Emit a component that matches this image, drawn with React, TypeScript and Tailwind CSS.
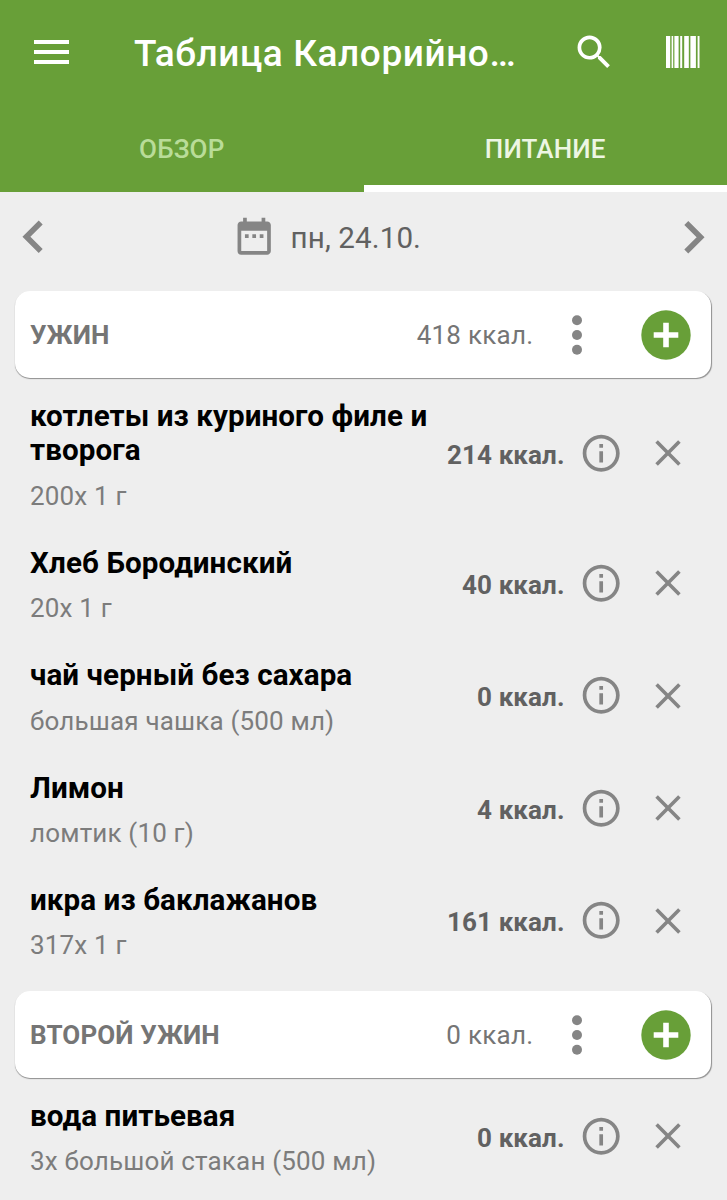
import { MdDateRange, MdInfoOutline, MdSearch } from "react-icons/md";

type Food = { name: string; amount: string; kcal: number };
type Meal = { title: string; kcal: number; foods: Food[] };

const meals: Meal[] = [
  {
    title: "УЖИН",
    kcal: 418,
    foods: [
      { name: "котлеты из куриного филе и творога", amount: "200x 1 г", kcal: 214 },
      { name: "Хлеб Бородинский", amount: "20x 1 г", kcal: 40 },
      { name: "чай черный без сахара", amount: "большая чашка (500 мл)", kcal: 0 },
      { name: "Лимон", amount: "ломтик (10 г)", kcal: 4 },
      { name: "икра из баклажанов", amount: "317x 1 г", kcal: 161 },
    ],
  },
  {
    title: "ВТОРОЙ УЖИН",
    kcal: 0,
    foods: [{ name: "вода питьевая", amount: "3x большой стакан (500 мл)", kcal: 0 }],
  },
];

const MenuIcon = () => (
  <svg width="35" height="24" viewBox="0 0 35 24" fill="currentColor">
    <rect width="35" height="4" />
    <rect y="10" width="35" height="4" />
    <rect y="20" width="35" height="4" />
  </svg>
);

const BarcodeIcon = () => (
  <svg width="34" height="32" viewBox="0 0 34 32" fill="currentColor">
    <rect x="0" width="4.2" height="32" />
    <rect x="5.6" width="1.6" height="32" />
    <rect x="8.4" width="4.2" height="32" />
    <rect x="14.2" width="2" height="32" />
    <rect x="18.2" width="4.6" height="32" />
    <rect x="24.4" width="5.5" height="32" />
    <rect x="31.6" width="1.9" height="32" />
  </svg>
);

const Chevron = ({ flip = false }: { flip?: boolean }) => (
  <svg
    width="21"
    height="34"
    viewBox="0 0 21 34"
    fill="none"
    stroke="currentColor"
    strokeWidth="5.6"
    className={flip ? "rotate-180" : ""}
  >
    <path d="M18.7 2.4 L4.4 16.7 L18.7 31" />
  </svg>
);

const DotsIcon = () => (
  <svg width="10" height="40" viewBox="0 0 10 40" fill="currentColor">
    <circle cx="5" cy="5.2" r="5" />
    <circle cx="5" cy="20" r="5" />
    <circle cx="5" cy="34.8" r="5" />
  </svg>
);

const AddIcon = () => (
  <svg width="50" height="50" viewBox="0 0 50 50">
    <circle cx="25" cy="25" r="24.7" fill="#689f38" />
    <path d="M25 12.7 V37.3 M12.7 25 H37.3" stroke="#fff" strokeWidth="5.6" />
  </svg>
);

const CloseIcon = () => (
  <svg width="26" height="26" viewBox="0 0 26 26" fill="none" stroke="currentColor" strokeWidth="3.6">
    <path d="M1.6 1.6 L24.4 24.4 M24.4 1.6 L1.6 24.4" />
  </svg>
);

const MealHeader = ({ title, kcal }: { title: string; kcal: number }) => (
  <div className="ml-[15px] mr-4 flex h-[87px] items-center rounded-[15px] bg-white pl-[15px] pr-[19.7px] text-[26px] text-[#757575] shadow-[0.5px_1px_1px_rgba(0,0,0,0.4)]">
    <h2 className="flex-1 pt-[2px] font-bold tracking-[0.15px]">{title}</h2>
    <span className="pt-[2px] tracking-[0.25px]">{kcal} ккал.</span>
    <button className="ml-[39px] text-[#858585]">
      <DotsIcon />
    </button>
    <button className="ml-[59px]">
      <AddIcon />
    </button>
  </div>
);

const FoodRow = ({ name, amount, kcal }: Food) => (
  <li className="flex items-center pb-[16.2px] pl-[30px] pr-[46px] pt-[18.6px]">
    <div className="flex-1">
      <h3 className="text-[29.6px] font-bold leading-[34.8px] tracking-[0.07px] text-black">{name}</h3>
      <p className="mt-[12.4px] text-[26px] leading-[30.5px] tracking-[0.17px] text-[#7c7c7c]">{amount}</p>
    </div>
    <span className="ml-3 pt-px text-[26px] font-bold tracking-[0.1px] text-[#616161]">{kcal} ккал.</span>
    <div className="flex items-center pb-[3px] text-[#858585]">
      <button className="ml-[14px]">
        <MdInfoOutline size={44.4} />
      </button>
      <button className="ml-[32px]">
        <CloseIcon />
      </button>
    </div>
  </li>
);

const App = () => {
  return (
    <div className="h-[1200px] w-[727px] overflow-hidden bg-[#eeeeee] font-['Roboto',sans-serif]">
      <header className="bg-[#689f38] text-white">
        <div className="flex h-[103px] items-center pl-[34px] pr-[27px]">
          <button>
            <MenuIcon />
          </button>
          <h1 className="ml-[65px] w-[390px] whitespace-nowrap pt-1 text-[37px] font-medium tracking-[0.57px]">
            Таблица Калорийно…
          </h1>
          <button className="ml-[47.6px] pt-[1.5px]">
            <MdSearch size={44.4} />
          </button>
          <button className="ml-auto">
            <BarcodeIcon />
          </button>
        </div>
        <nav className="flex h-[89px] text-[26px] font-medium tracking-[0.15px]">
          <button className="flex-1 pt-[4px] text-[#b9dc98]">ОБЗОР</button>
          <button className="flex-1 border-b-[7px] border-white pt-[11px] text-[#edf6e3]">ПИТАНИЕ</button>
        </nav>
      </header>

      <div className="flex h-[99px] items-center px-[22px] pb-[10px] text-[#858585]">
        <button>
          <Chevron />
        </button>
        <div className="ml-[188.6px] flex flex-1 items-center">
          <MdDateRange size={44.4} />
          <span className="ml-[14.6px] pt-[4px] text-[29.6px] tracking-[0.1px] text-[#616161]">пн, 24.10.</span>
        </div>
        <button>
          <Chevron flip />
        </button>
      </div>

      <main>
        {meals.map((meal) => (
          <section key={meal.title} className="mb-[14px]">
            <MealHeader title={meal.title} kcal={meal.kcal} />
            <ul className="pt-[2px]">
              {meal.foods.map((food) => (
                <FoodRow key={food.name} {...food} />
              ))}
            </ul>
          </section>
        ))}
      </main>
    </div>
  );
};

export default App;
